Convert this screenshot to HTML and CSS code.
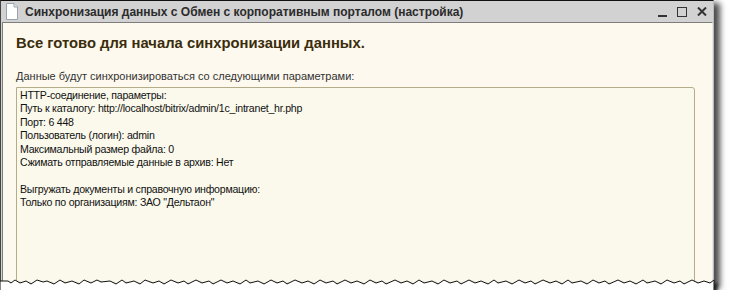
FILE: index.html
```html
<!DOCTYPE html>
<html lang="ru">
<head>
    <meta charset="UTF-8">
    <title>Синхронизация данных</title>
    <link rel="stylesheet" href="styles.css">
</head>
<body>
    <div class="window">
        <div class="titlebar">
            <svg class="doc-icon" width="14" height="17" viewBox="0 0 14 17">
                <path d="M1.5 0.5 H9 L12.5 4 V16.5 H1.5 Z" fill="#fff" stroke="#9aa3b0"/>
                <path d="M9 0.5 V4 H12.5" fill="#e4e8ee" stroke="#9aa3b0"/>
            </svg>
            <span class="title">Синхронизация данных с Обмен с корпоративным порталом (настройка)</span>
            <div class="buttons">
                <span class="btn-min"></span>
                <span class="btn-max"></span>
                <svg class="btn-close" width="10" height="9" viewBox="0 0 10 9">
                    <path d="M1 0.5 L9 8.5 M9 0.5 L1 8.5" stroke="#333" stroke-width="2"/>
                </svg>
            </div>
        </div>
        <div class="content">
            <h1>Все готово для начала синхронизации данных.</h1>
            <p class="label">Данные будут синхронизироваться со следующими параметрами:</p>
            <div class="params">HTTP-соединение, параметры:
Путь к каталогу: http://localhost/bitrix/admin/1c_intranet_hr.php
Порт: 6 448
Пользователь (логин): admin
Максимальный размер файла: 0
Сжимать отправляемые данные в архив: Нет

Выгружать документы и справочную информацию:
Только по организациям: ЗАО "Дельтаон"</div>
        </div>
    </div>
    <svg class="torn" width="730" height="14" viewBox="0 0 730 14">
        <defs>
            <filter id="sh" x="-5%" y="-50%" width="110%" height="250%">
                <feGaussianBlur in="SourceAlpha" stdDeviation="1.8"/>
                <feOffset dx="3" dy="3"/>
                <feComponentTransfer><feFuncA type="linear" slope="0.75"/></feComponentTransfer>
                <feMerge><feMergeNode/><feMergeNode in="SourceGraphic"/></feMerge>
            </filter>
        </defs>
        <path filter="url(#sh)" fill="#fff" stroke="#111" stroke-width="1"
              d="M0 3 L8 3 L11 5 L15 2 L20 5 L26 3 L31 6 L37 2 L43 4 L47 3 L54 6 L60 2 L65 5 L72 3 L79 6 L84 2 L91 5 L97 2 L101 4 L110 3 L116 6 L122 2 L126 5 L134 3 L140 6 L145 2 L153 5 L159 3 L164 6 L171 2 L178 5 L184 3 L188 6 L196 2 L202 5 L209 3 L213 6 L221 2 L227 5 L233 3 L240 6 L246 2 L250 5 L258 3 L264 6 L271 2 L277 5 L283 3 L287 6 L295 2 L302 5 L308 3 L314 6 L320 2 L326 5 L333 3 L337 6 L345 2 L351 5 L357 3 L364 6 L370 2 L376 5 L382 3 L386 6 L395 2 L401 5 L407 3 L413 6 L419 2 L424 5 L432 3 L438 6 L444 2 L450 5 L457 3 L461 6 L469 2 L475 5 L481 3 L488 6 L494 2 L498 5 L506 3 L512 6 L519 2 L525 5 L531 3 L535 6 L543 2 L550 5 L556 3 L562 6 L568 2 L572 5 L581 3 L587 6 L593 2 L599 5 L605 3 L609 6 L618 2 L624 5 L630 3 L636 6 L643 2 L647 5 L655 3 L661 6 L667 2 L674 5 L680 3 L684 6 L692 2 L698 5 L704 3 L710 5 L714 2 L714 14 L0 14 Z"/>
    </svg>
</body>
</html>
```

FILE: styles.css
```css
body {
    margin: 0;
    background: #fff;
    font-family: "Liberation Sans", Arial, sans-serif;
    width: 730px;
    height: 290px;
    overflow: hidden;
    position: relative;
}
.window {
    width: 712px;
    height: 285px;
    border-top: 1px solid #111;
    border-left: 1px solid #444;
    border-right: 1px solid #bbb;
    background: #d2d2d2;
    box-shadow: 6px 3px 6px rgba(0, 0, 0, 0.7);
    display: flex;
    flex-direction: column;
}
.titlebar {
    height: 21px;
    display: flex;
    align-items: center;
    padding-left: 4px;
    flex-shrink: 0;
}
.doc-icon {
    margin-right: 6px;
}
.title {
    font-weight: bold;
    font-size: 12px;
    color: #2b2b2b;
}
.buttons {
    margin-left: auto;
    display: flex;
    align-items: center;
    gap: 10px;
    padding-right: 6px;
}
.btn-min {
    width: 9px;
    height: 2px;
    background: #333;
    margin-top: 9px;
}
.btn-max {
    width: 8px;
    height: 8px;
    border: 1px solid #333;
}
.content {
    flex: 1;
    margin: 0 0 0 1px;
    border-top: 1px solid #7d7d7d;
    border-left: 1px solid #7d7d7d;
    border-right: 1px solid #e8e8e8;
    background: #fdf9ee;
    padding: 0 17px 0 13px;
    display: flex;
    flex-direction: column;
}
h1 {
    margin: 12px 0 0 0;
    font-size: 14.8px;
    font-weight: bold;
    color: #3b2d0c;
}
.label {
    margin: 19px 0 0 0;
    font-size: 11px;
    color: #333;
}
.params {
    margin-top: 5px;
    flex: 1;
    border: 1px solid #b4ad88;
    border-radius: 0 3px 0 0;
    background: #fbf9ec;
    padding: 1px 3px;
    font-size: 10.6px;
    letter-spacing: -0.25px;
    line-height: 13.4px;
    color: #111;
    white-space: pre-line;
}
.torn {
    position: absolute;
    left: 0;
    top: 278px;
}
```
